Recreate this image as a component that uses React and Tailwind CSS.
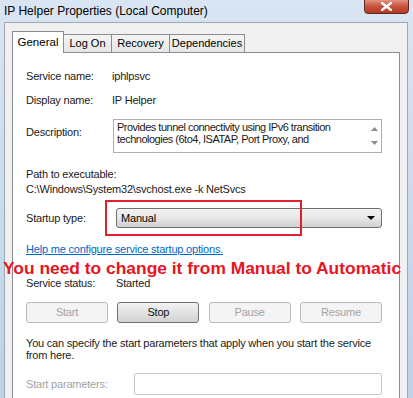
import React from 'react';

const font = { fontFamily: '"Liberation Sans", Arial, sans-serif' };

const ActionButton = ({ label, enabled }) => (
  <div
    className={`w-[82px] h-[21px] flex items-center justify-center rounded-[3px] border text-[11px] ${
      enabled
        ? 'border-[#707070] bg-gradient-to-b from-[#f2f2f2] to-[#d2d2d2] text-[#111]'
        : 'border-[#b8babc] bg-[#f4f4f4] text-[#a3a3a3]'
    }`}
  >
    {label}
  </div>
);

export default function App() {
  return (
    <div
      className="relative w-[413px] h-[398px] overflow-hidden flex flex-col bg-gradient-to-b from-[#d9e5f2] to-[#bcd2ea] text-[11px] text-[#1a1a1a]"
      style={font}
    >
      {/* Title bar */}
      <div className="h-[22px] shrink-0 flex items-start relative">
        <span className="pl-[4px] pt-[2px] text-[12px] text-black">IP Helper Properties (Local Computer)</span>
        <div className="absolute right-[4px] top-[-2px] w-[45px] h-[16px] rounded-b-[4px] border border-[#5c2a23] bg-gradient-to-b from-[#e59c8c] via-[#c9543f] to-[#b53a23] flex items-center justify-center">
          <svg width="11" height="9" viewBox="0 0 11 9">
            <path d="M1 1 L10 8 M10 1 L1 8" stroke="#fff" strokeWidth="2.4" strokeLinecap="square" />
          </svg>
        </div>
      </div>

      {/* Window body */}
      <div className="flex-1 ml-[4px] mr-[5px] bg-[#f0f0f0] border border-[#a0a8b4] border-b-0 flex flex-col pl-[7px] pr-[7px]">
        {/* Tabs */}
        <div className="flex items-end h-[29px] pt-[8px]">
          <div className="relative z-10 w-[52px] h-[22px] -mb-px bg-white border border-[#898c95] border-b-0 flex items-center justify-center text-[11.5px] text-black">
            General
          </div>
          <div className="w-[48px] h-[18px] bg-gradient-to-b from-[#f4f4f4] to-[#e6e6e6] border border-[#898c95] border-l-0 border-b-0 flex items-center justify-center text-black">
            Log On
          </div>
          <div className="w-[58px] h-[18px] bg-gradient-to-b from-[#f4f4f4] to-[#e6e6e6] border border-[#898c95] border-l-0 border-b-0 flex items-center justify-center text-black">
            Recovery
          </div>
          <div className="w-[75px] h-[18px] bg-gradient-to-b from-[#f4f4f4] to-[#e6e6e6] border border-[#898c95] border-l-0 border-b-0 flex items-center justify-center text-black">
            Dependencies
          </div>
        </div>

        {/* Panel */}
        <div className="flex-1 bg-white border border-[#898c95] border-b-0 pl-[13px] pr-[17px] flex flex-col tracking-[-0.2px]">
          <div className="mt-[16px] h-[14px] flex items-center">
            <span className="w-[86px]">Service name:</span>
            <span>iphlpsvc</span>
          </div>
          <div className="mt-[10px] h-[14px] flex items-center">
            <span className="w-[86px]">Display name:</span>
            <span>IP Helper</span>
          </div>
          <div className="mt-[12px] flex items-start">
            <span className="w-[87px] mt-[5px]">Description:</span>
            <div className="flex-1 h-[34px] border border-[#abadb3] flex">
              <div className="flex-1 pl-[3px] pt-[1px] leading-[12px] tracking-[-0.5px]">
                Provides tunnel connectivity using IPv6 transition technologies (6to4, ISATAP, Port Proxy, and
              </div>
              <div className="w-[14px] flex flex-col items-center justify-between py-[7px]">
                <svg width="7" height="4" viewBox="0 0 7 4"><path d="M0 4 L3.5 0 L7 4 Z" fill="#8a8a8a" /></svg>
                <svg width="7" height="4" viewBox="0 0 7 4"><path d="M0 0 L3.5 4 L7 0 Z" fill="#8a8a8a" /></svg>
              </div>
            </div>
          </div>
          <div className="mt-[14px] h-[14px] flex items-center">Path to executable:</div>
          <div className="mt-[1px] h-[14px] flex items-center">C:\Windows\System32\svchost.exe -k NetSvcs</div>
          <div className="mt-[12px] flex items-center">
            <span className="w-[90px]">Startup type:</span>
            <div className="flex-1 h-[20px] rounded-[3px] border border-[#707070] bg-gradient-to-b from-[#f2f2f2] via-[#e8e8e8] to-[#d0d0d0] flex items-center justify-between pl-[4px] pr-[6px] text-black">
              <span>Manual</span>
              <svg width="8" height="4" viewBox="0 0 8 4"><path d="M0 0 L8 0 L4 4 Z" fill="#000" /></svg>
            </div>
          </div>
          <div className="mt-[14px] h-[14px] flex items-center">
            <span className="text-[#0066cc] underline">Help me configure service startup options.</span>
          </div>
          <div className="mt-[20px] h-[14px] flex items-center">
            <span className="w-[90px]">Service status:</span>
            <span>Started</span>
          </div>
          <div className="mt-[12px] flex justify-between">
            <ActionButton label="Start" enabled={false} />
            <ActionButton label="Stop" enabled />
            <ActionButton label="Pause" enabled={false} />
            <ActionButton label="Resume" enabled={false} />
          </div>
          <div className="mt-[14px] leading-[12px] -mr-[10px]">
            You can specify the start parameters that apply when you start the service from here.
          </div>
          <div className="mt-[12px] flex items-center">
            <span className="w-[108px] text-[#a3a3a3]">Start parameters:</span>
            <div className="flex-1 h-[22px] border border-[#c5c8cc] rounded-[2px] bg-white" />
          </div>
        </div>
      </div>

      {/* Annotation overlay */}
      <div className="absolute left-[105px] top-[200px] w-[197px] h-[36px] border-2 border-[#e0202a]" />
      <div className="absolute left-[3px] top-[257px] text-[17.4px] font-bold leading-[22px] text-[#e8141e] whitespace-nowrap">
        You need to change it from Manual to Automatic
      </div>
    </div>
  );
}
